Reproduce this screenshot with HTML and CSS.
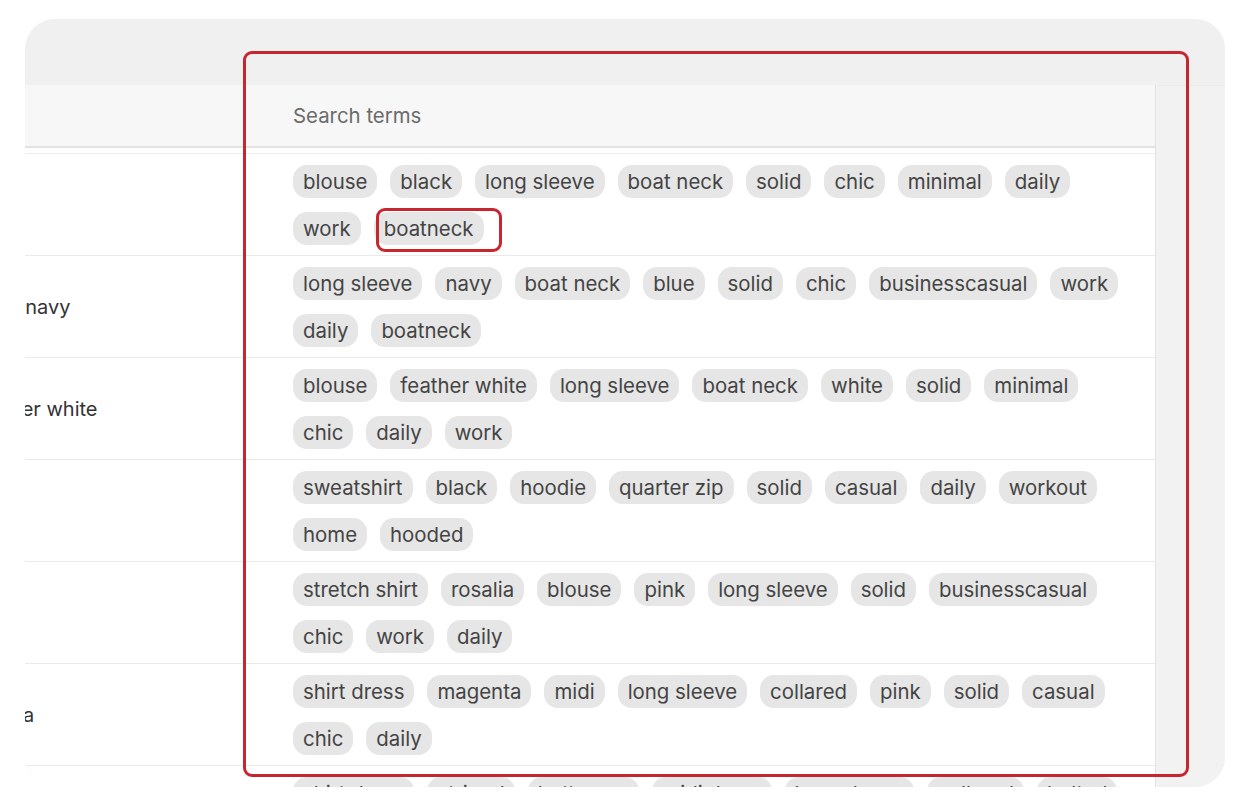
FILE: index.html
```html
<!DOCTYPE html>
<html lang="en">
<head>
  <meta charset="UTF-8" />
  <title>Search terms</title>
  <link rel="stylesheet" href="styles.css">
</head>
<body>

  <div class="panel">
    <div class="toolbar"></div>
    <div class="table-wrap">
      <div class="scroller" id="scroller">
        <div class="grid">
          <div class="row head">
            <div class="cell name">Product</div>
            <div class="cell terms">Search terms</div>
          </div>

          <div class="row item">
            <div class="cell name">Boatneck blouse</div>
            <div class="cell terms">
              <span class="chip">blouse</span><span class="chip">black</span><span class="chip">long sleeve</span><span class="chip">boat neck</span><span class="chip">solid</span><span class="chip">chic</span><span class="chip">minimal</span><span class="chip">daily</span><span class="chip">work</span><span class="chip">boatneck</span>
            </div>
          </div>

          <div class="row item">
            <div class="cell name">Long sleeve blouse navy</div>
            <div class="cell terms">
              <span class="chip">long sleeve</span><span class="chip">navy</span><span class="chip">boat neck</span><span class="chip">blue</span><span class="chip">solid</span><span class="chip">chic</span><span class="chip">businesscasual</span><span class="chip">work</span><span class="chip">daily</span><span class="chip">boatneck</span>
            </div>
          </div>

          <div class="row item">
            <div class="cell name">Boat neck top feather white</div>
            <div class="cell terms">
              <span class="chip">blouse</span><span class="chip">feather white</span><span class="chip">long sleeve</span><span class="chip">boat neck</span><span class="chip">white</span><span class="chip">solid</span><span class="chip">minimal</span><span class="chip">chic</span><span class="chip">daily</span><span class="chip">work</span>
            </div>
          </div>

          <div class="row item">
            <div class="cell name">Zip hoodie</div>
            <div class="cell terms">
              <span class="chip">sweatshirt</span><span class="chip">black</span><span class="chip">hoodie</span><span class="chip">quarter zip</span><span class="chip">solid</span><span class="chip">casual</span><span class="chip">daily</span><span class="chip">workout</span><span class="chip">home</span><span class="chip">hooded</span>
            </div>
          </div>

          <div class="row item">
            <div class="cell name">Rosalia shirt</div>
            <div class="cell terms">
              <span class="chip">stretch shirt</span><span class="chip">rosalia</span><span class="chip">blouse</span><span class="chip">pink</span><span class="chip">long sleeve</span><span class="chip">solid</span><span class="chip">businesscasual</span><span class="chip">chic</span><span class="chip">work</span><span class="chip">daily</span>
            </div>
          </div>

          <div class="row item">
            <div class="cell name">Shirt dress, &#8202;magenta</div>
            <div class="cell terms">
              <span class="chip">shirt dress</span><span class="chip">magenta</span><span class="chip">midi</span><span class="chip">long sleeve</span><span class="chip">collared</span><span class="chip">pink</span><span class="chip">solid</span><span class="chip">casual</span><span class="chip">chic</span><span class="chip">daily</span>
            </div>
          </div>

          <div class="row item">
            <div class="cell name">Shirt dress, stripe</div>
            <div class="cell terms">
              <span class="chip">shirt dress</span><span class="chip">striped</span><span class="chip">button up</span><span class="chip">midi dress</span><span class="chip">long sleeve</span><span class="chip">collared</span><span class="chip">belted</span><span class="chip">daily</span>
            </div>
          </div>
        </div>
      </div>
      <div class="side"></div>
    </div>
  </div>

  <div class="mark mark-col"></div>
  <div class="mark mark-chip"></div>

  <script>
    // table is scrolled all the way to the right
    const scroller = document.getElementById('scroller');
    scroller.scrollLeft = scroller.scrollWidth;
  </script>

</body>
</html>
```

FILE: styles.css
```css
body {
  margin: 0;
  padding: 0;
  background: #fff;
  font-family: Inter, 'Noto Sans', sans-serif;
  color: #333;
  overflow: hidden;
}
.panel {
  margin: 19px 0 0 25px;
  width: 1200px;
  height: 768px;
  background: #f0f0f0;
  border-radius: 30px;
  overflow: hidden;
  display: flex;
  flex-direction: column;
}
.toolbar {
  height: 66px;
  flex-shrink: 0;
}
.table-wrap {
  flex: 1;
  display: flex;
  min-height: 0;
}
.scroller {
  width: 1130px;
  overflow: hidden;
  background: #fff;
}
.grid {
  width: 1330px;
}
.row {
  display: flex;
}
.cell {
  box-sizing: border-box;
}
.name {
  width: 445px;
  padding-left: 12px;
  display: flex;
  align-items: center;
  white-space: pre;
  overflow: hidden;
  font-size: 20px;
  color: #333;
}
.terms {
  width: 885px;
  padding: 11px 20px 10px 23px;
  display: flex;
  flex-wrap: wrap;
  align-content: flex-start;
  gap: 14px 13px;
}
.head {
  height: 63px;
  box-sizing: border-box;
  background: #f7f7f7;
  border-bottom: 2px solid #e3e3e3;
  margin-bottom: 5px;
}
.head .cell {
  align-items: center;
  align-content: center;
  padding-top: 0;
  padding-bottom: 0;
  font-size: 20.4px;
  color: #6b6b6b;
}
.item {
  border-bottom: 1px solid #eaeaea;
}
.head + .item {
  border-top: 1px solid #eeeeee;
}
.chip {
  display: inline-block;
  height: 33px;
  line-height: 33px;
  padding: 0 10px;
  background: #e6e6e6;
  border-radius: 14px;
  font-size: 20.4px;
  color: #444;
  white-space: nowrap;
}
.side {
  flex: 1;
  background: #f2f2f2;
  border-left: 1px solid #e2e2e2;
  border-top: 1px solid #ececec;
}
.mark {
  position: absolute;
  box-sizing: border-box;
  border: 3px solid #c8262f;
  border-radius: 9px;
}
.mark-col {
  left: 243px;
  top: 51px;
  width: 946px;
  height: 726px;
}
.mark-chip {
  left: 376px;
  top: 208px;
  width: 126px;
  height: 44px;
}
```
